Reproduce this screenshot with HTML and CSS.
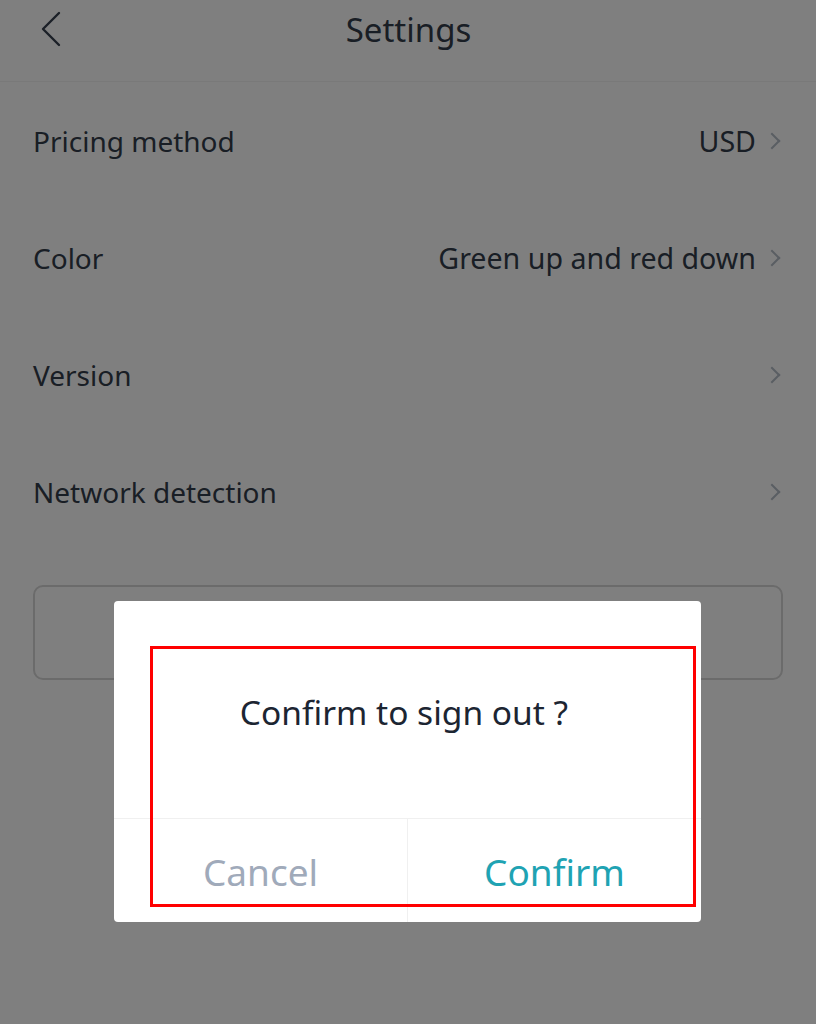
FILE: index.html
```html
<!DOCTYPE html>
<html lang="en">
<head>
  <meta charset="UTF-8">
  <meta name="viewport" content="width=device-width, initial-scale=1.0">
  <title>Settings</title>
  <link rel="stylesheet" href="styles.css">
</head>
<body>
  <header class="topbar">
    <span class="back">
      <svg width="22" height="36" viewBox="0 0 22 36"><path d="M19 2 L3 18 L19 34" fill="none" stroke="#37404e" stroke-width="2.4" stroke-linecap="round" stroke-linejoin="round"/></svg>
    </span>
    <h1>Settings</h1>
  </header>

  <section class="lista">
    <div class="item">
      <span class="rotulo">Pricing method</span>
      <span class="valor">USD <i class="seta"></i></span>
    </div>
    <div class="item">
      <span class="rotulo">Color</span>
      <span class="valor">Green up and red down <i class="seta"></i></span>
    </div>
    <div class="item">
      <span class="rotulo">Version</span>
      <span class="valor"><i class="seta"></i></span>
    </div>
    <div class="item">
      <span class="rotulo">Network detection</span>
      <span class="valor"><i class="seta"></i></span>
    </div>
  </section>

  <div class="botao-sair"></div>

  <div class="mascara"></div>

  <div class="dialogo">
    <div class="dialogo-corpo">Confirm to sign out ?</div>
    <div class="dialogo-botoes">
      <button class="cancelar">Cancel</button>
      <button class="confirmar">Confirm</button>
    </div>
  </div>

  <div class="marcacao"></div>
</body>
</html>
```

FILE: styles.css
```css
:root {
  --texto: #333c4a;
  --seta: #b4bcc6;
  --linha: #f0f0f0;
  --cinza: #a0aaba;
  --verde: #1fa3b3;
}

* {
  box-sizing: border-box;
  margin: 0;
  padding: 0;
  font-family: 'Noto Sans', sans-serif;
}

body {
  background-color: white;
  color: var(--texto);
  width: 816px;
  height: 1024px;
  overflow: hidden;
  position: relative;
}

.topbar {
  height: 82px;
  border-bottom: 1px solid #f2f2f2;
  display: flex;
  align-items: center;
  justify-content: center;
  position: relative;
}

.topbar h1 {
  font-size: 33px;
  font-weight: 400;
  margin-top: -22px;
  margin-right: -1px;
}

.back {
  position: absolute;
  left: 40px;
  top: 11px;
}

.lista {
  padding: 0 33px;
}

.item {
  height: 117px;
  display: flex;
  align-items: center;
  justify-content: space-between;
  font-size: 28px;
}

.valor {
  display: flex;
  align-items: center;
  gap: 10px;
  margin-right: -1px;
  font-size: 28.6px;
}

.seta {
  display: inline-block;
  width: 12px;
  height: 12px;
  border-top: 2px solid var(--seta);
  border-right: 2px solid var(--seta);
  transform: rotate(45deg);
  margin-right: 6px;
}

.botao-sair {
  margin: 35px 33px 0;
  height: 95px;
  border: 2px solid #d6d6d6;
  border-radius: 10px;
}

.mascara {
  position: absolute;
  inset: 0;
  background-color: rgba(0, 0, 0, 0.5);
}

.dialogo {
  position: absolute;
  left: 114px;
  top: 601px;
  width: 587px;
  height: 321px;
  background-color: white;
  border-radius: 4px;
  display: flex;
  flex-direction: column;
}

.dialogo-corpo {
  height: 218px;
  display: flex;
  align-items: center;
  justify-content: center;
  font-size: 33.5px;
  color: #1c2532;
  padding-top: 4px;
  padding-right: 7px;
  border-bottom: 1px solid var(--linha);
}

.dialogo-botoes {
  flex: 1;
  display: grid;
  grid-template-columns: 294px 1fr;
}

.dialogo-botoes button {
  background: none;
  border: none;
  font-size: 37px;
  font-family: 'Noto Sans', sans-serif;
  padding-top: 2px;
}

.cancelar {
  color: var(--cinza);
  border-right: 1px solid var(--linha) !important;
}

.confirmar {
  color: var(--verde);
}

.marcacao {
  position: absolute;
  left: 150px;
  top: 646px;
  width: 546px;
  height: 261px;
  border: 3px solid #ff0000;
}
```
